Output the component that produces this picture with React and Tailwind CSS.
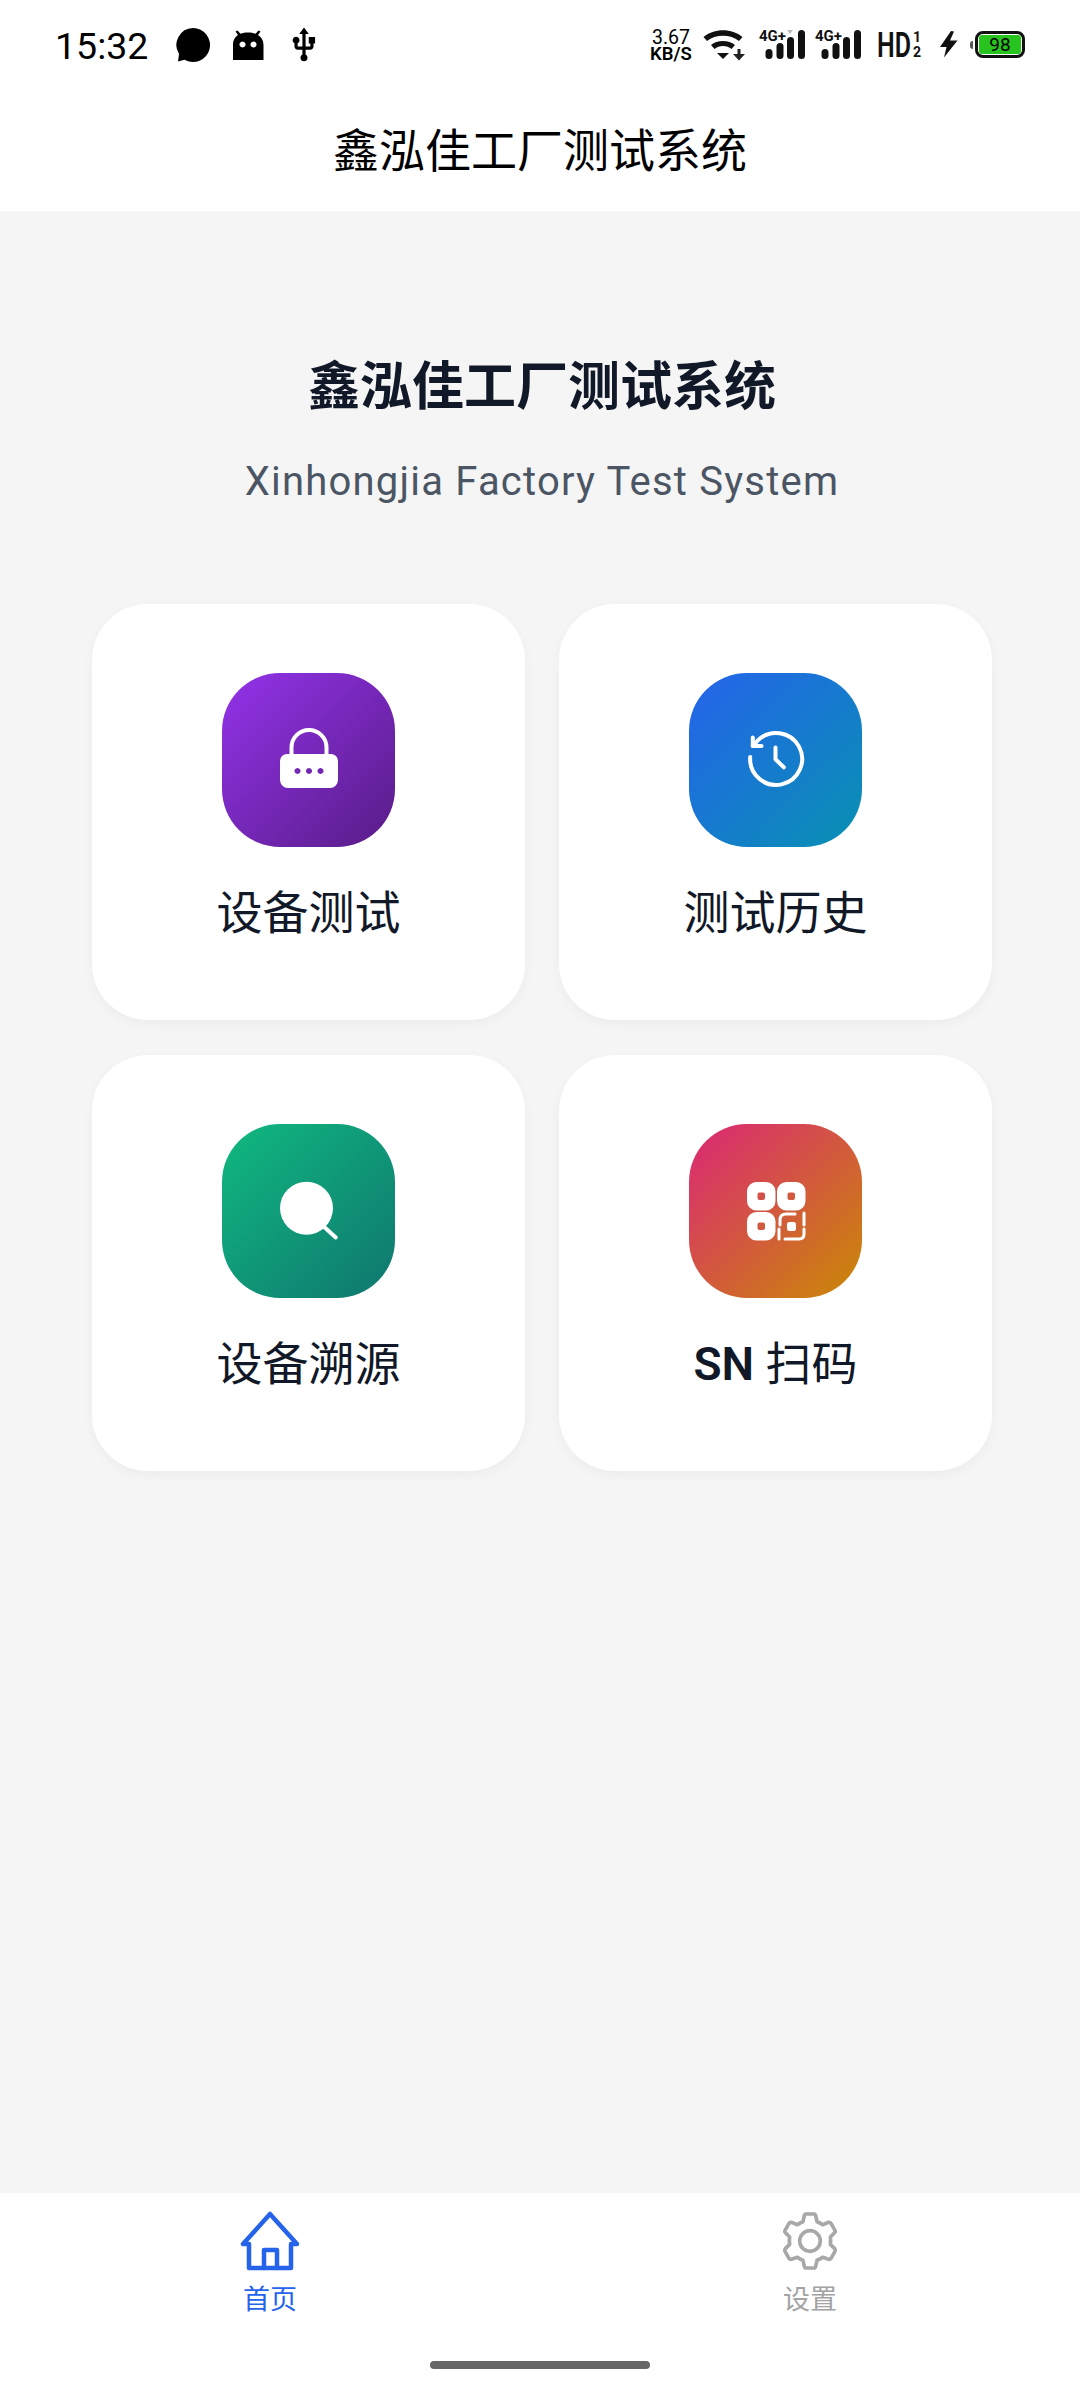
import React from "react";
import { MdUsb } from "react-icons/md";

const Signal = ({ dim, className }) => (
  <svg width="47" height="34" viewBox="0 0 47 34" className={className}>
    <text x="0" y="13" fontFamily="Roboto" fontWeight="700" fontSize="15" fill="#111">4G+</text>
    {dim && <path d="M28 2 H34 L31 6 Z" fill="#bbb" />}
    <rect x="6.500" y="21" width="7" height="10" rx="3.500" fill="#111" />
    <rect x="17.500" y="15" width="7" height="16" rx="3.500" fill="#111" />
    <rect x="28" y="9" width="7" height="22" rx="3.500" fill="#111" />
    <rect x="39" y="2" width="7" height="29" rx="3.500" fill="#111" />
  </svg>
);

const StatusBar = () => (
  <div className="flex h-[90px] items-start bg-white pl-[55px] text-black">
    <div className="mt-[24px] w-[92px] text-[37.500px] leading-[44px]">15:32</div>
    <svg width="36" height="36" viewBox="0 0 36 36" className="ml-[28px] mt-[27px]">
      <path d="M18 1 a17 17 0 1 1 -8.500 31.700 L3 34.500 L4 27 A17 17 0 0 1 18 1 Z" />
    </svg>
    <svg width="32" height="32" viewBox="0 0 32 32" className="ml-[21px] mt-[29px]">
      <path
        fillRule="evenodd"
        d="M1 31 V16 C1 11 3 8 6 6 L3.500 2.500 L5.500 1.500 L8.500 4.800 C13 3 19 3 23.500 4.800 L26.500 1.500 L28.500 2.500 L26 6 C29 8 31.500 11 31.500 16 V31 Z M10.500 12.500 a3 3 0 1 0 0.010 0 Z M21.500 12.500 a3 3 0 1 0 0.010 0 Z"
      />
    </svg>
    <MdUsb className="ml-[21px] mt-[26px]" size={38} />

    <div className="ml-[326px] mt-[30px] flex w-[44px] flex-col items-center">
      <span className="text-[19.500px] leading-[15px]">3.67</span>
      <span className="mt-[2px] text-[18.500px] font-semibold leading-[15px]">KB/S</span>
    </div>
    <svg width="42" height="32" viewBox="0 0 42 32" className="ml-[10px] mt-[29px]">
      <path d="M0.500 8 C11 -1 29 -1 39.500 8 L36 12 C27.500 5 12.500 5 4 12 Z" fill="#111" />
      <path d="M8 16 C14 10.500 26 10.500 32 16 L28.500 20 C24 16 16 16 11.500 20 Z" fill="#111" />
      <path d="M14 24 H26 L20 30 Z" fill="#111" />
      <path d="M34.500 20 V25 H30 L36 31.500 L42 25 H37.500 V20 Z" fill="#222" />
    </svg>
    <Signal dim className="ml-[14px] mt-[28px]" />
    <Signal className="ml-[9px] mt-[28px]" />
    <svg width="46" height="34" viewBox="0 0 46 34" className="ml-[15px] mt-[29px]">
      <text transform="translate(0 28) scale(1 1.42)" fontFamily="Roboto" fontWeight="600" fontSize="25" fill="#111">HD</text>
      <text x="36" y="13" fontFamily="Roboto" fontWeight="700" fontSize="14" fill="#111">1</text>
      <text x="36" y="28" fontFamily="Roboto" fontWeight="700" fontSize="14" fill="#111">2</text>
    </svg>
    <svg width="18" height="27" viewBox="0 0 18 27" className="ml-[17px] mt-[31px]">
      <path d="M11 0 L0 16 H6.500 L4 26.500 L17.500 9.500 H10 L14 0.500 Z" fill="#111" />
    </svg>
    <div className="ml-[12px] mt-[31px] flex items-center">
      <div className="mr-[2px] h-[8px] w-[3px] rounded-l-sm bg-[#555]" />
      <div className="flex h-[27px] w-[50px] items-center justify-center rounded-[8px] border-[3px] border-[#111] p-[1px]">
        <div className="flex h-full w-full items-center justify-center rounded-[3px] bg-[#27c41f] text-[19px] leading-none text-black">
          98
        </div>
      </div>
    </div>
  </div>
);

const LockIcon = () => (
  <svg width="64" height="64" viewBox="0 0 64 64" fill="none">
    <path d="M14.500 28 V19.500 a17.500 17.500 0 0 1 35 0 V28" stroke="#fff" strokeWidth="4" />
    <path
      fill="#fff"
      fillRule="evenodd"
      d="M10 26 H54 a7 7 0 0 1 7 7 V52 a8 8 0 0 1 -8 8 H11 a8 8 0 0 1 -8 -8 V33 a7 7 0 0 1 7 -7 Z M20.500 40 a3 3 0 1 0 0.010 0 Z M32 40 a3 3 0 1 0 0.010 0 Z M43.500 40 a3 3 0 1 0 0.010 0 Z"
    />
  </svg>
);

const HistoryIcon = () => (
  <svg width="64" height="64" viewBox="0 0 64 64" fill="none" stroke="#fff" strokeWidth="4" strokeLinecap="round" strokeLinejoin="round">
    <path d="M6.200 29 A26 26 0 1 0 13.600 12.700 L8.800 18" />
    <path d="M8.800 9.500 V18 H17.500" />
    <path d="M31.500 19.500 V31.300 L39.800 39.300" />
  </svg>
);

const SearchIcon = () => (
  <svg width="64" height="64" viewBox="0 0 64 64" fill="none">
    <circle cx="29.500" cy="29.200" r="26.500" fill="#fff" />
    <path d="M47.500 48.200 L58.800 58.500" stroke="#fff" strokeWidth="4" strokeLinecap="round" />
  </svg>
);

const QrIcon = () => (
  <svg width="64" height="64" viewBox="0 0 64 64" fill="none">
    <path
      fill="#fff"
      fillRule="evenodd"
      d="M12.500 3 H22 a9.500 9.500 0 0 1 9.500 9.500 V22 a9.500 9.500 0 0 1 -9.500 9.500 H12.500 a9.500 9.500 0 0 1 -9.500 -9.500 V12.500 a9.500 9.500 0 0 1 9.500 -9.500 Z M15.500 13.500 a2 2 0 0 0 -2 2 V19 a2 2 0 0 0 2 2 H19 a2 2 0 0 0 2 -2 V15.500 a2 2 0 0 0 -2 -2 Z"
    />
    <path
      fill="#fff"
      fillRule="evenodd"
      d="M42.500 3 H52 a9.500 9.500 0 0 1 9.500 9.500 V22 a9.500 9.500 0 0 1 -9.500 9.500 H42.500 a9.500 9.500 0 0 1 -9.500 -9.500 V12.500 a9.500 9.500 0 0 1 9.500 -9.500 Z M45.500 13.500 a2 2 0 0 0 -2 2 V19 a2 2 0 0 0 2 2 H49 a2 2 0 0 0 2 -2 V15.500 a2 2 0 0 0 -2 -2 Z"
    />
    <path
      fill="#fff"
      fillRule="evenodd"
      d="M12.500 33 H22 a9.500 9.500 0 0 1 9.500 9.500 V52 a9.500 9.500 0 0 1 -9.500 9.500 H12.500 a9.500 9.500 0 0 1 -9.500 -9.500 V42.500 a9.500 9.500 0 0 1 9.500 -9.500 Z M15.500 43.500 a2 2 0 0 0 -2 2 V49 a2 2 0 0 0 2 2 H19 a2 2 0 0 0 2 -2 V45.500 a2 2 0 0 0 -2 -2 Z"
    />
    <g stroke="#fff" strokeWidth="3" strokeLinecap="round">
      <path d="M35 50 V60" />
      <path d="M36 46 V41 Q36 35 42 35 H51" />
      <path d="M60 34 V46" />
      <path d="M60 50 V55 Q60 60 55 60 H41" />
    </g>
    <rect x="43" y="43" width="9" height="9" rx="2.500" fill="#fff" />
  </svg>
);

const GearIcon = () => (
  <svg width="80" height="80" viewBox="0 0 240 240" fill="none" stroke="#a8a8a8" strokeWidth="11" strokeLinejoin="round" className="shrink-0">
    <g transform="translate(0 -4)">
      <path d="M108 43 H132 Q136 43 137 48 L141 66 Q150 69 158 75 L176 68 Q180 67 183 71 L195 92 Q197 96 194 99 L181 112 Q183 122 181 134 L194 147 Q197 151 195 155 L183 176 Q180 180 176 179 L158 173 Q150 179 141 182 L137 200 Q136 205 132 205 H108 Q104 205 103 200 L99 182 Q90 179 82 173 L64 179 Q60 180 57 176 L45 155 Q43 151 46 147 L59 134 Q57 122 59 112 L46 99 Q43 96 45 92 L57 71 Q60 67 64 68 L82 75 Q90 69 99 66 L103 48 Q104 43 108 43 Z" />
      <circle cx="120" cy="124" r="31" />
    </g>
  </svg>
);

const cards = [
  { label: "设备测试", tile: "bg-[linear-gradient(135deg,#9333ea,#581c87)]", icon: <LockIcon /> },
  { label: "测试历史", tile: "bg-[linear-gradient(135deg,#2563eb,#0891b2)]", icon: <HistoryIcon /> },
  { label: "设备溯源", tile: "bg-[linear-gradient(135deg,#10b981,#0f766e)]", icon: <SearchIcon /> },
  {
    label: (
      <>
        <span className="font-semibold">SN</span> 扫码
      </>
    ),
    tile: "bg-[linear-gradient(135deg,#db2777,#ca8a04)]",
    icon: <QrIcon />
  }
];

const App = () => {
  return (
    <div className="flex h-[2400px] flex-col bg-[#f5f5f5] font-[Roboto,'Noto_Sans_CJK_SC',sans-serif]">
      <StatusBar />
      <div className="flex h-[121px] items-center justify-center bg-white text-[46px] leading-[60px] text-black">
        鑫泓佳工厂测试系统
      </div>

      <div className="flex flex-1 flex-col items-center pl-[92px] pr-[88px] pt-[147px]">
        <h1 className="text-[52px] font-bold leading-[60px] text-[#111827]">鑫泓佳工厂测试系统</h1>
        <p className="mt-[40px] text-[40px] leading-[48px] tracking-[1.200px] text-[#4b5563]">
          Xinhongjia Factory Test System
        </p>

        <div className="mt-[98px] grid w-full grid-cols-2 gap-x-[34px] gap-y-[35px]">
          {cards.map((card, index) => (
            <div
              key={index}
              className="flex h-[416px] flex-col items-center rounded-[56px] bg-white pt-[69px] shadow-[0_4px_12px_rgba(0,0,0,0.04)]"
            >
              <div className={`flex h-[174px] w-[173px] items-center justify-center rounded-[58px] ${card.tile}`}>
                {card.icon}
              </div>
              <div className="mt-[38px] text-[46px] leading-[56px] text-[#111827]">{card.label}</div>
            </div>
          ))}
        </div>
      </div>

      <div className="h-[207px] bg-white pt-[18px]">
        <div className="grid grid-cols-2">
          <div className="flex flex-col items-center text-[#2563eb]">
            <div className="flex h-[60px] items-center justify-center">
              <svg width="60" height="60" viewBox="0 0 60 60" fill="none" stroke="currentColor" strokeWidth="4.500" strokeLinejoin="round" strokeLinecap="round">
                <path d="M30 3 L3 33 H9 V57 H51 V33 H57 Z" />
                <path d="M24 57 V39 H37 V57" />
              </svg>
            </div>
            <span className="mt-[14px] text-[27px] leading-[30px]">首页</span>
          </div>
          <div className="flex flex-col items-center text-[#a3a3a3]">
            <div className="flex h-[60px] items-center justify-center">
              <GearIcon />
            </div>
            <span className="mt-[14px] text-[27px] leading-[30px]">设置</span>
          </div>
        </div>
        <div className="mx-auto mt-[46px] h-[8px] w-[220px] rounded-full bg-[#666]" />
      </div>
    </div>
  );
};

export default App;
